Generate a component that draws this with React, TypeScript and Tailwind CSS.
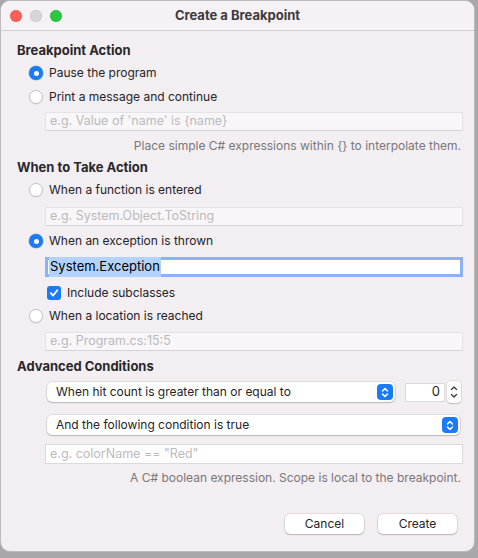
import React from "react";

const font = { fontFamily: "Inter, 'Noto Sans', sans-serif" };

function Radio({ checked }: { checked?: boolean }) {
  if (checked) {
    return (
      <span className="flex h-[14px] w-[14px] shrink-0 items-center justify-center rounded-full bg-[#1b7bf5] shadow-[0_0_0_0.5px_rgba(0,80,200,0.4)]">
        <span className="h-[5px] w-[5px] rounded-full bg-white" />
      </span>
    );
  }
  return (
    <span className="h-[14px] w-[14px] shrink-0 rounded-full border border-[#c9c4c9] bg-white shadow-[0_0.5px_1px_rgba(0,0,0,0.12)]" />
  );
}

function RadioRow({ label, checked }: { label: string; checked?: boolean }) {
  return (
    <div className="flex h-[20px] items-center gap-[6px] pl-[28px] text-[12px] text-[#262326]">
      <Radio checked={checked} />
      <span>{label}</span>
    </div>
  );
}

function Field({ placeholder }: { placeholder: string }) {
  return (
    <div className="ml-[44px] mr-[11px] flex h-[19px] items-center border border-[#e6e2e6] border-b-[#d6d2d6] bg-[#f8f6f8] px-[4px] text-[12.5px] text-[#bdb9bd]">
      {placeholder}
    </div>
  );
}

function Heading({ children }: { children: React.ReactNode }) {
  return (
    <div className="flex h-[20px] items-center pl-[16px] text-[13px] font-bold text-[#2a272a]">
      {children}
    </div>
  );
}

function Help({ children }: { children: React.ReactNode }) {
  return (
    <div className="flex h-[18px] items-center justify-end pr-[13px] text-[12px] text-[#7a767a]">
      {children}
    </div>
  );
}

function Updown() {
  return (
    <span className="flex h-[16px] w-[16px] items-center justify-center rounded-[4px] bg-[#1b7bf5]">
      <svg width="8" height="11" viewBox="0 0 8 11" fill="none" stroke="white" strokeWidth="1.5" strokeLinecap="round" strokeLinejoin="round">
        <path d="M1.5 4 L4 1.5 L6.5 4" />
        <path d="M1.5 7 L4 9.5 L6.5 7" />
      </svg>
    </span>
  );
}

function Popup({ label, className }: { label: string; className: string }) {
  return (
    <div className={`flex h-[20px] items-center justify-between rounded-[5px] bg-white pl-[9px] pr-[2px] text-[12px] text-[#262326] shadow-[0_0_0_0.5px_rgba(0,0,0,0.15),0_1px_1.5px_rgba(0,0,0,0.18)] ${className}`}>
      <span>{label}</span>
      <Updown />
    </div>
  );
}

function Button({ label }: { label: string }) {
  return (
    <div className="flex h-[20px] w-[79px] items-center justify-center rounded-[5px] bg-white text-[12px] text-[#262326] shadow-[0_0_0_0.5px_rgba(0,0,0,0.15),0_1px_1.5px_rgba(0,0,0,0.18)]">
      {label}
    </div>
  );
}

export default function App() {
  return (
    <div className="h-[558px] w-[478px] bg-[#a9a7a9]" style={font}>
      <div className="h-[552px] w-[475px] overflow-hidden rounded-[10px] border border-[#bdb9bd] bg-[#f2eef2]">
        {/* title bar */}
        <div className="relative flex h-[30px] items-center border-b border-[#d3cfd3] bg-[#f6f1f5]">
          <div className="flex gap-[8px] pl-[9px]">
            <span className="h-[12px] w-[12px] rounded-full bg-[#fe5f57] shadow-[inset_0_0_0_0.5px_rgba(0,0,0,0.15)]" />
            <span className="h-[12px] w-[12px] rounded-full bg-[#d8d4d8] shadow-[inset_0_0_0_0.5px_rgba(0,0,0,0.12)]" />
            <span className="h-[12px] w-[12px] rounded-full bg-[#28c840] shadow-[inset_0_0_0_0.5px_rgba(0,0,0,0.15)]" />
          </div>
          <div className="absolute inset-0 flex items-center justify-center text-[13px] font-bold text-[#3d3a3d]">
            Create a Breakpoint
          </div>
        </div>

        <div className="pt-[10px]">
          <Heading>Breakpoint Action</Heading>
          <div className="mt-[2px]">
            <RadioRow label="Pause the program" checked />
          </div>
          <div className="mt-[4px]">
            <RadioRow label="Print a message and continue" />
          </div>
          <div className="mt-[5px]">
            <Field placeholder="e.g. Value of 'name' is {name}" />
          </div>
          <div className="mt-[6px]">
            <Help>Place simple C# expressions within {"{}"} to interpolate them.</Help>
          </div>

          <div className="mt-[3px]">
            <Heading>When to Take Action</Heading>
          </div>
          <div className="mt-[2px]">
            <RadioRow label="When a function is entered" />
          </div>
          <div className="mt-[7px]">
            <Field placeholder="e.g. System.Object.ToString" />
          </div>
          <div className="mt-[5px]">
            <RadioRow label="When an exception is thrown" checked />
          </div>
          <div className="ml-[44px] mr-[11px] mt-[6px] flex h-[20px] items-center border-[3px] border-[#87b4f9] bg-white pl-[1px] text-[13px] text-black">
            <span className="bg-[#b3d3fd] px-[1px]">System.Exception</span>
          </div>
          <div className="mt-[6px] flex h-[20px] items-center gap-[6px] pl-[46px] text-[12px] text-[#262326]">
            <span className="flex h-[14px] w-[14px] items-center justify-center rounded-[3px] bg-[#1b7bf5]">
              <svg width="10" height="10" viewBox="0 0 10 10" fill="none" stroke="white" strokeWidth="1.8" strokeLinecap="round" strokeLinejoin="round">
                <path d="M1.8 5.2 L4 7.6 L8.3 2.2" />
              </svg>
            </span>
            <span>Include subclasses</span>
          </div>
          <div className="mt-[3px]">
            <RadioRow label="When a location is reached" />
          </div>
          <div className="mt-[6px]">
            <Field placeholder="e.g. Program.cs:15:5" />
          </div>

          <div className="mt-[6px]">
            <Heading>Advanced Conditions</Heading>
          </div>
          <div className="mt-[4px] flex items-center">
            <Popup label="When hit count is greater than or equal to" className="ml-[46px] w-[348px]" />
            <div className="ml-[10px] flex h-[19px] w-[40px] items-center justify-end border border-[#dcd8dc] bg-white pr-[4px] text-[13px] text-[#262326]">
              0
            </div>
            <div className="ml-[2px] flex h-[22px] w-[14px] flex-col items-center justify-center rounded-[4px] bg-white shadow-[0_0_0_0.5px_rgba(0,0,0,0.15),0_1px_1px_rgba(0,0,0,0.15)]">
              <svg width="8" height="16" viewBox="0 0 8 16" fill="none" stroke="#3a373a" strokeWidth="1.3" strokeLinecap="round" strokeLinejoin="round">
                <path d="M1.5 5.5 L4 3 L6.5 5.5" />
                <path d="M1.5 10.5 L4 13 L6.5 10.5" />
              </svg>
            </div>
          </div>
          <div className="mt-[12px]">
            <Popup label="And the following condition is true" className="ml-[46px] mr-[14px]" />
          </div>
          <div className="mt-[9px]">
            <div className="ml-[44px] mr-[11px] flex h-[20px] items-center border border-[#dcd8dc] bg-white px-[4px] text-[12.5px] text-[#bdb9bd]">
              e.g. colorName == "Red"
            </div>
          </div>
          <div className="mt-[5px]">
            <Help>A C# boolean expression. Scope is local to the breakpoint.</Help>
          </div>

          <div className="mt-[27px] flex justify-end gap-[14px] pr-[17px]">
            <Button label="Cancel" />
            <Button label="Create" />
          </div>
        </div>
      </div>
    </div>
  );
}
